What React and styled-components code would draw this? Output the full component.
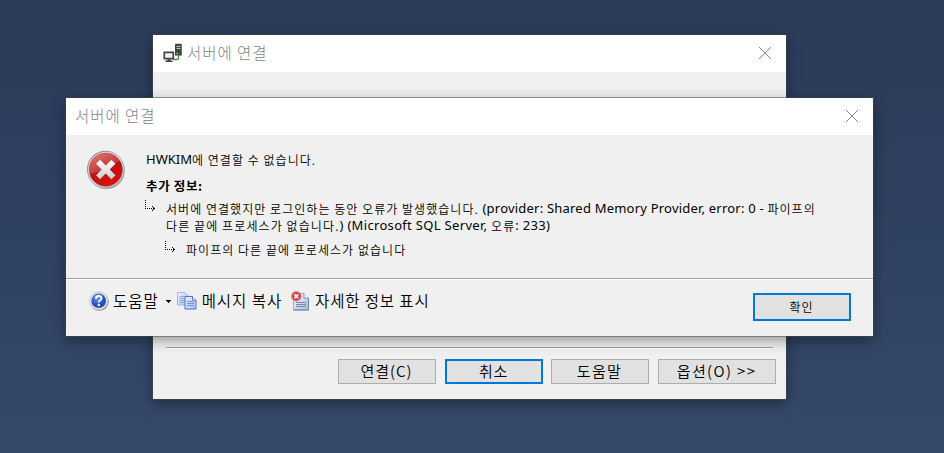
import React from "react";
import styled, { createGlobalStyle } from "styled-components";

const GlobalStyle = createGlobalStyle`
  html, body { margin: 0; padding: 0; overflow: hidden; }
  *, *::before, *::after { box-sizing: border-box; }
`;

const KO = `"Noto Sans CJK KR", sans-serif`;

const Desktop = styled.main`
  position: relative;
  width: 944px;
  height: 453px;
  overflow: hidden;
  background: linear-gradient(#2b3b59 0%, #2d3e5e 30%, #35496a 100%);
  font-family: ${KO};
  color: #000;
`;

const Window = styled.section`
  position: absolute;
  left: ${(p) => p.$x}px;
  top: ${(p) => p.$y}px;
  width: ${(p) => p.$w}px;
  height: ${(p) => p.$h}px;
  display: flex;
  flex-direction: column;
  background: #f0f0f0;
  box-shadow: 0 0 0 1px rgba(70, 75, 80, 0.5), 0 4px 12px 1px rgba(0, 0, 0, 0.36);
`;

const TitleBar = styled.header`
  flex: none;
  height: 37px;
  display: flex;
  align-items: center;
  gap: 4px;
  padding: 0 14px 2px ${(p) => p.$left}px;
  background: #fff;
`;

const Title = styled.h1`
  flex: 1;
  margin: 0;
  padding-bottom: 2px;
  font-size: 15.5px;
  font-weight: 300;
  line-height: 20px;
  letter-spacing: 0.95px;
  color: #848484;
`;

const CloseButton = styled.button`
  display: flex;
  padding: 0;
  border: 0;
  background: none;
`;

const Spacer = styled.div`
  flex: 1;
`;

const Separator = styled.hr`
  flex: none;
  height: 2px;
  margin: 0 ${(p) => p.$inset || 0}px;
  border: 0;
  border-top: 1px solid #a0a0a0;
  border-bottom: 1px solid #fff;
`;

const ButtonRow = styled.div`
  display: grid;
  grid-template-columns: 107px 106px 107px 118px;
  padding: 10px 10px 15px;
  justify-content: end;
`;

const Button = styled.button`
  flex: none;
  width: ${(p) => p.$w || 98}px;
  height: ${(p) => p.$h || 25}px;
  padding: 0 1px 2px 0;
  border: ${(p) => (p.$primary ? "2px solid #0078d7" : "1px solid #adadad")};
  background: #e1e1e1;
  font-family: ${KO};
  font-size: ${(p) => p.$size || 15}px;
  font-weight: 350;
  line-height: 19px;
  letter-spacing: ${(p) => p.$track || 0}px;
  color: #000;
`;

const Body = styled.div`
  height: 143px;
  display: flex;
  gap: 17px;
  padding: 14px 20px 0;
`;

const Message = styled.div`
  display: flex;
  flex-direction: column;
`;

const Line = styled.p`
  display: flex;
  margin: 0;
  height: 17px;
  font-size: 12px;
  font-weight: 350;
  line-height: 17px;
  white-space: pre;
`;

const Lead = styled(Line)`
  margin-top: 2px;
  padding-left: 1px;
`;

const Heading = styled(Line)`
  margin-top: 9px;
  padding-left: 1px;
  font-size: 12.5px;
  font-weight: 700;
  letter-spacing: 0.65px;
`;

const Detail = styled.div`
  display: flex;
  gap: 10px;
  margin-top: ${(p) => p.$gap}px;
  padding-left: ${(p) => p.$indent}px;
`;

const Ko = styled.span`
  letter-spacing: ${(p) => p.$track || 1.04}px;
`;

const En = styled.span`
  font-family: "Noto Sans", sans-serif;
  font-size: 13px;
  font-weight: 400;
  letter-spacing: ${(p) => p.$track ?? 0.21}px;
`;

const Footer = styled.footer`
  flex: 1;
  display: flex;
  align-items: flex-start;
  justify-content: space-between;
  padding: 13px 22px 0 23px;
`;

const Tools = styled.nav`
  display: flex;
  align-items: center;
  height: 16px;
`;

const Tool = styled.button`
  display: flex;
  align-items: center;
  gap: ${(p) => p.$gap || 4}px;
  margin: 0 ${(p) => p.$after || 0}px 0 0;
  padding: 0;
  border: 0;
  background: none;
  font-family: ${KO};
  font-size: 15.5px;
  font-weight: 350;
  line-height: 20px;
  letter-spacing: ${(p) => p.$track || 0}px;
  color: #000;
`;

const ToolLabel = styled.span`
  display: block;
  padding-bottom: 2px;
`;

const Svg = styled.svg`
  flex: none;
  display: block;
`;

const CloseIcon = () => (
  <Svg width="14" height="14" viewBox="0 0 14 14">
    <path d="M1 1 13 13M13 1 1 13" stroke="#8c8c8c" strokeWidth="1" />
  </Svg>
);

const ServerIcon = () => (
  <Svg width="20" height="20" viewBox="0 0 20 20">
    <path d="M15.500 12v3q0 1.500-1.500 1.500h-4" fill="none" stroke="#3d9b3d" strokeWidth="1.400" />
    <path d="M12 1.500l1-.8h5l.8.800v11h-6.800z" fill="#444" />
    <path d="M13.500 3.500h4M13.500 5.500h4" stroke="#c4c4c4" strokeWidth="1" />
    <path d="M13.500 10.500h1.500" stroke="#ccc" />
    <path d="M1.300 9.300h9v6.400h-9z" fill="#f0f0f0" stroke="#444" strokeWidth="1.700" />
    <path d="M4.500 16.300h3v1.200h2v1.500H2.500v-1.500h2z" fill="#444" />
  </Svg>
);

const ErrorIcon = () => (
  <Svg width="42" height="42" viewBox="0 0 42 42">
    <defs>
      <linearGradient id="ring" x1="0" y1="0" x2="1" y2="1">
        <stop offset="0" stopColor="#777" />
        <stop offset=".5" stopColor="#bbb" />
        <stop offset="1" stopColor="#888" />
      </linearGradient>
      <linearGradient id="red" x1=".2" y1="0" x2=".7" y2="1">
        <stop offset="0" stopColor="#dc5a54" />
        <stop offset=".5" stopColor="#b81414" />
        <stop offset="1" stopColor="#e01010" />
      </linearGradient>
      <linearGradient id="cross" x1="0" y1="0" x2="0" y2="1">
        <stop offset="0" stopColor="#fff" />
        <stop offset="1" stopColor="#ccc" />
      </linearGradient>
    </defs>
    <ellipse cx="20.500" cy="22" rx="18.300" ry="18.300" fill="#000" opacity=".2" />
    <circle cx="19.800" cy="20.600" r="18.300" fill="#f2f2f2" stroke="url(#ring)" strokeWidth="1.200" />
    <circle cx="19.800" cy="20.600" r="16.600" fill="url(#red)" stroke="#9c1515" strokeWidth=".6" />
    <path d="M3.500 25Q20 22 35 11A17 17 0 0 0 3.500 17z" fill="#fff" opacity=".15" />
    <path d="m10 14.800 4-4 5.700 5.700 5.700-5.700 4 4-5.700 5.800 5.700 5.700-4 4-5.700-5.700-5.700 5.700-4-4 5.700-5.700z" fill="url(#cross)" />
  </Svg>
);

const ArrowIcon = () => (
  <Svg width="11" height="12" viewBox="0 0 11 12" shapeRendering="crispEdges">
    <path d="M.5 0v9M2 8.500h7" fill="none" stroke="#000" strokeDasharray="1 1" />
    <path d="M7 6h1v1h1v1h1v1h-1v1h-1v1h-1v-1h1v-1h1v-1h-1v-1h-1z" />
  </Svg>
);

const HelpIcon = () => (
  <Svg width="20" height="20" viewBox="0 0 20 20">
    <defs>
      <radialGradient id="blue" cx=".4" cy=".3">
        <stop offset="0" stopColor="#6c9bf0" />
        <stop offset="1" stopColor="#1f4fc0" />
      </radialGradient>
    </defs>
    <circle cx="10.400" cy="10.600" r="9.300" fill="#8f8e82" />
    <circle cx="9.700" cy="9.800" r="9.200" fill="#deded8" stroke="#c4c4bc" strokeWidth=".6" />
    <circle cx="9.700" cy="9.800" r="7.300" fill="url(#blue)" />
    <path d="M6.800 7.800q.2-2.800 2.900-2.800t2.800 2.300q0 1.300-1.600 2.200-1.100.7-1.100 2" fill="none" stroke="#fff" strokeWidth="1.900" />
    <circle cx="9.800" cy="14" r="1.200" fill="#fff" />
  </Svg>
);

const CaretIcon = () => (
  <Svg width="5" height="3" viewBox="0 0 5 3" shapeRendering="crispEdges">
    <path d="M0 0h5v1H4v1H3v1H2V2H1V1H0z" />
  </Svg>
);

const CopyIcon = () => (
  <Svg width="20" height="18" viewBox="0 0 20 18">
    <defs>
      <linearGradient id="sheet" x1="0" y1="0" x2="1" y2="1">
        <stop offset="0" stopColor="#eef4ff" />
        <stop offset="1" stopColor="#9fbff6" />
      </linearGradient>
    </defs>
    <path d="M.5.500h7.500l3 3v9.500H.500z" fill="url(#sheet)" stroke="#a3b4dc" />
    <path d="M2.500 4.500h5M2.500 6.500h6M2.500 8.500h6M2.500 10.500h5" stroke="#93a9d4" />
    <path d="M8 4.500h7.500l3.500 3.500v9H8z" fill="url(#sheet)" stroke="#4f74c6" />
    <path d="M15.500 4.500v3.500H19" fill="#fff" stroke="#5577c4" />
    <path d="M10 9.500h7M10 11.500h7M10 13.500h7" stroke="#6d92de" />
  </Svg>
);

const DetailsIcon = () => (
  <Svg width="19" height="20" viewBox="0 0 19 20">
    <defs>
      <linearGradient id="page" x1="0" y1="0" x2="1" y2="1">
        <stop offset="0" stopColor="#fafcff" />
        <stop offset="1" stopColor="#a9b9d8" />
      </linearGradient>
    </defs>
    <path d="M2.500 2.500h10.500l4.500 4.500v12h-15z" fill="url(#page)" stroke="#a2aec6" />
    <path d="M2.500 19h15V8" fill="none" stroke="#6f80a4" />
    <path d="M13 2.500v4.500h4.500" fill="#fff" stroke="#8090b0" />
    <path d="M5 11.500h10M5 13.500h10M5 15.500h10" stroke="#7388b4" />
    <circle cx="5.300" cy="5.300" r="4.900" fill="#d04a4a" stroke="#dc9a9a" strokeWidth=".7" />
    <path d="m3.300 3.300 4 4m0-4-4 4" stroke="#fff" strokeWidth="1.500" />
  </Svg>
);

export default function App() {
  return (
    <>
      <GlobalStyle />
      <Desktop>
        <Window $x={153} $y={35} $w={633} $h={364}>
          <TitleBar $left={10}>
            <ServerIcon />
            <Title>서버에 연결</Title>
            <CloseButton aria-label="닫기"><CloseIcon /></CloseButton>
          </TitleBar>
          <Spacer />
          <Separator $inset={13} />
          <ButtonRow>
            <Button $track={1}>연결(C)</Button>
            <Button $primary $track={0.8}>취소</Button>
            <Button $track={1.3}>도움말</Button>
            <Button $w={118} $track={1.4}>{"옵션(O) >>"}</Button>
          </ButtonRow>
        </Window>

        <Window $x={66} $y={98} $w={807} $h={238}>
          <TitleBar $left={9}>
            <Title>서버에 연결</Title>
            <CloseButton aria-label="닫기"><CloseIcon /></CloseButton>
          </TitleBar>
          <Body>
            <ErrorIcon />
            <Message>
              <Lead>
                <En $track={0}>HWKIM</En>
                <Ko>에 연결할 수 없습니다.</Ko>
              </Lead>
              <Heading>추가 정보:</Heading>
              <Detail $gap={6} $indent={0}>
                <ArrowIcon />
                <div>
                  <Line>
                    <Ko>서버에 연결했지만 로그인하는 동안 오류가 발생했습니다. </Ko>
                    <En>(provider: Shared Memory Provider, error: 0 - </En>
                    <Ko>파이프의</Ko>
                  </Line>
                  <Line>
                    <Ko $track={1.1}>다른 끝에 프로세스가 없습니다.</Ko>
                    <En $track={0.32}>) (Microsoft SQL Server, </En>
                    <Ko>오류</Ko>
                    <En $track={0.32}>: 233)</En>
                  </Line>
                </div>
              </Detail>
              <Detail $gap={7} $indent={20}>
                <ArrowIcon />
                <Line><Ko>파이프의 다른 끝에 프로세스가 없습니다</Ko></Line>
              </Detail>
            </Message>
          </Body>
          <Separator />
          <Footer>
            <Tools>
              <Tool $after={7} $track={0.95}><HelpIcon /><ToolLabel>도움말</ToolLabel></Tool>
              <Tool $after={6} aria-label="도움말 메뉴"><CaretIcon /></Tool>
              <Tool $after={9} $gap={5} $track={0.95}><CopyIcon /><ToolLabel>메시지 복사</ToolLabel></Tool>
              <Tool $gap={5} $track={0.85}><DetailsIcon /><ToolLabel>자세한 정보 표시</ToolLabel></Tool>
            </Tools>
            <Button $primary $h={28} $size={12} $track={1}>확인</Button>
          </Footer>
        </Window>
      </Desktop>
    </>
  );
}
